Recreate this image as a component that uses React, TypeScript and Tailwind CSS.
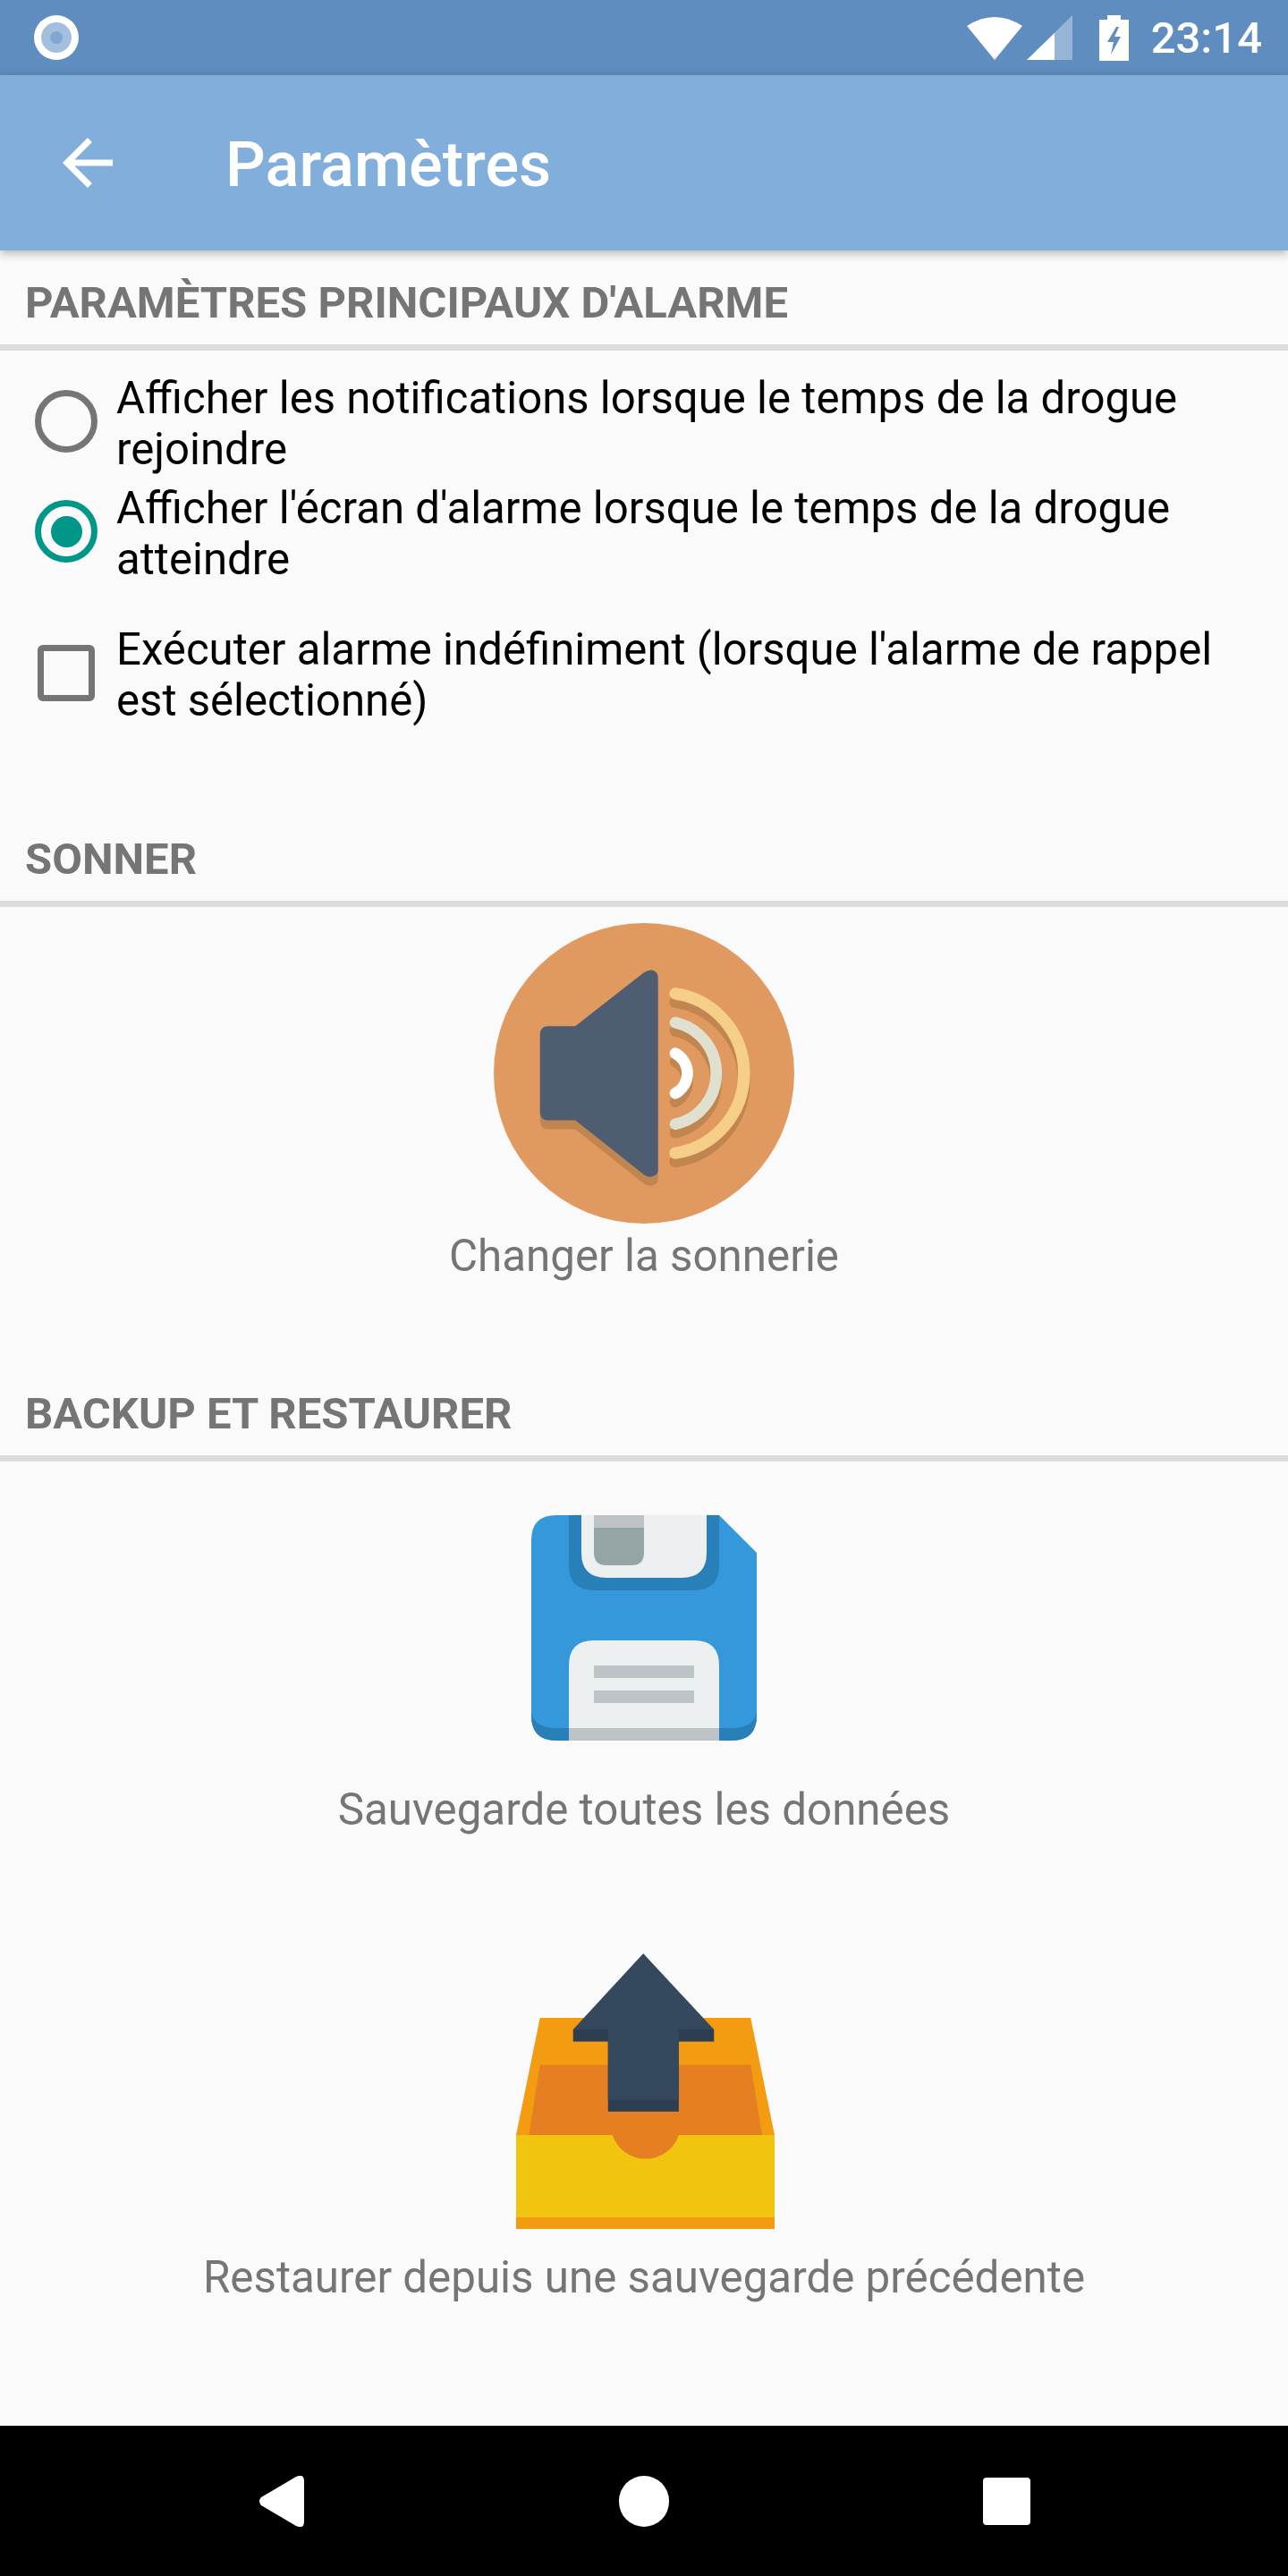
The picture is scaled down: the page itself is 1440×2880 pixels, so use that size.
import React from 'react';

const SectionHeader: React.FC<{ title: string }> = ({ title }) => (
  <div className="flex h-[112px] flex-col justify-end">
    <div className="pl-[28px] text-[49px] leading-[57px] font-bold text-[#757575] mb-[18px]">{title}</div>
    <div className="h-[7px] bg-[#dcdcdc]" />
  </div>
);

const SpeakerIcon = () => (
  <svg width="336" height="336" viewBox="67 67 1006 1006">
    <circle cx="570" cy="570" r="503" fill="#e0995e" />
    <g fill="none" stroke="#c1854f" strokeLinecap="round">
      <path d="M675 331A270 270 0 0 1 675 865" strokeWidth="40" />
      <path d="M675 428A174 174 0 0 1 675 768" strokeWidth="38" />
      <path d="M675 531A76 76 0 0 1 675 665" strokeWidth="38" />
    </g>
    <path fill="#c1854f" d="M250 442H340L565 266Q578 255 595 258Q617 264 617 285V925Q617 942 595 946Q580 948 565 935L340 757H250Q222 757 222 730V470Q222 442 250 442Z" />
    <path fill="#4f5d73" d="M250 412H340L565 236Q578 225 595 224Q617 228 617 250V895Q617 912 595 916Q580 918 565 905L340 727H250Q222 727 222 700V440Q222 412 250 412Z" />
    <g fill="none" strokeLinecap="round">
      <path d="M675 303A270 270 0 0 1 675 837" strokeWidth="40" stroke="#f5cf87" />
      <path d="M675 400A174 174 0 0 1 675 740" strokeWidth="38" stroke="#e0e0d1" />
      <path d="M675 503A76 76 0 0 1 675 637" strokeWidth="38" stroke="#ffffff" />
    </g>
  </svg>
);

const SaveIcon = () => (
  <svg width="252" height="252" viewBox="72 72 756 756">
    <path fill="#3498db" d="M156 72H702L828 198V744Q828 828 744 828H156Q72 828 72 744V156Q72 72 156 72Z" />
    <path fill="#2980b9" d="M72 720V744Q72 828 156 828H744Q828 828 828 744V720Q828 786 744 786H156Q72 786 72 720Z" />
    <path fill="#2980b9" d="M198 72H702V240Q702 324 618 324H282Q198 324 198 240Z" />
    <path fill="#ecf0f1" d="M240 72H660V198Q660 282 576 282H324Q240 282 240 198Z" />
    <path fill="#95a5a6" d="M282 72H450V198Q450 240 408 240H324Q282 240 282 198Z" />
    <rect x="282" y="72" width="168" height="42" fill="#bdc3c7" />
    <path fill="#ecf0f1" d="M198 828V576Q198 492 282 492H618Q702 492 702 576V828Z" />
    <rect x="198" y="786" width="504" height="42" fill="#bdc3c7" />
    <rect x="282" y="576" width="336" height="42" fill="#bdc3c7" />
    <rect x="282" y="660" width="336" height="42" fill="#bdc3c7" />
  </svg>
);

const RestoreIcon = () => (
  <svg width="289" height="308" viewBox="52 72 866 923">
    <path fill="#f39c12" d="M132 288H838L918 680V995H52V680Z" />
    <path fill="#e67e22" d="M132 445H838L876 680H95Z" />
    <path fill="#f1c40f" d="M52 680H918V956H52Z" />
    <path fill="#e67e22" d="M375 680A117 117 0 0 0 597 680Z" />
    <path fill="#2c3e50" d="M243 327H715V367H597V602H360V367H243Z" />
    <path fill="#34495e" d="M478 72L715 327H597V563H360V327H243Z" />
  </svg>
);

const App: React.FC = () => {
  return (
    <div className="flex h-[2880px] w-[1440px] flex-col bg-[#fafafa] font-['Roboto',sans-serif]">
      {/* status bar */}
      <div className="flex h-[84px] shrink-0 items-center bg-[#5f8dbf] pl-[38px] pr-[29px] text-white">
        <div className="flex h-[50px] w-[50px] items-center justify-center rounded-full bg-white">
          <div className="flex h-[34px] w-[34px] items-center justify-center rounded-full bg-[#a3bfdd]">
            <div className="h-[14px] w-[14px] rounded-full bg-[#82a6cf]" />
          </div>
        </div>
        <div className="ml-auto flex items-center">
          <svg width="62" height="50" viewBox="0 0 62 50">
            <path fill="#fff" d="M0 12Q31 -8 62 12L31 50Z" />
          </svg>
          <svg className="ml-[5px]" width="51" height="50" viewBox="0 0 51 50">
            <path fill="#fff" fillOpacity="0.35" d="M51 0V50H0Z" />
            <path fill="#fff" d="M31 20V50H0Z" />
          </svg>
          <svg className="ml-[30px]" width="33" height="51" viewBox="0 0 33 51">
            <path fill="#fff" fillRule="evenodd" d="M9 0H24V5H33V51H0V5H9ZM19 13L9 30H16L13 44L24 24H17L22 13Z" />
          </svg>
          <span className="ml-[25px] text-[49px] leading-none font-medium">23:14</span>
        </div>
      </div>

      {/* toolbar */}
      <div className="relative z-10 flex h-[196px] shrink-0 items-center bg-[#82aedb] pl-[56px] text-white shadow-[0_3px_10px_rgba(0,0,0,0.3)]">
        <svg width="84" height="84" viewBox="0 0 24 24" fill="#fff">
          <path d="M20 11H7.83l5.59-5.59L12 4l-8 8 8 8 1.41-1.41L7.83 13H20v-2z" />
        </svg>
        <h1 className="ml-[112px] mt-[5px] text-[70.3px] leading-none font-medium">Paramètres</h1>
      </div>

      {/* content */}
      <div className="flex-1">
        <SectionHeader title="PARAMÈTRES PRINCIPAUX D'ALARME" />

        <div className="mt-[25px] flex flex-col text-[49.15px] leading-[57px] text-black">
          <div className="flex items-start">
            <div className="ml-[39px] mt-[19px] h-[70px] w-[70px] shrink-0 rounded-full border-[7px] border-[#757575]" />
            <div className="ml-[21px] mr-[40px]">Afficher les notifications lorsque le temps de la drogue rejoindre</div>
          </div>
          <div className="mt-[9px] flex items-start">
            <div className="ml-[39px] mt-[19px] flex h-[70px] w-[70px] shrink-0 items-center justify-center rounded-full border-[7px] border-[#009688]">
              <div className="h-[35px] w-[35px] rounded-full bg-[#009688]" />
            </div>
            <div className="ml-[21px] mr-[40px]">Afficher l'écran d'alarme lorsque le temps de la drogue atteindre</div>
          </div>
          <div className="mt-[44px] flex items-start">
            <div className="ml-[42px] mt-[23px] h-[63px] w-[64px] shrink-0 rounded-[6px] border-[7px] border-[#757575]" />
            <div className="ml-[24px] mr-[40px]">Exécuter alarme indéfiniment (lorsque l'alarme de rappel est sélectionné)</div>
          </div>
        </div>

        <div className="mt-[90px]">
          <SectionHeader title="SONNER" />
        </div>
        <div className="mt-[18px] flex flex-col items-center">
          <SpeakerIcon />
          <div className="mt-[8px] text-[49.3px] leading-[57px] text-[#757575]">Changer la sonnerie</div>
        </div>

        <div className="mt-[89px]">
          <SectionHeader title="BACKUP ET RESTAURER" />
        </div>
        <div className="mt-[60px] flex flex-col items-center">
          <SaveIcon />
          <div className="mt-[49px] text-[49.3px] leading-[57px] text-[#757575]">Sauvegarde toutes les données</div>
          <div className="ml-[2px] mt-[132px]">
            <RestoreIcon />
          </div>
          <div className="mt-[26px] text-[49.3px] leading-[57px] text-[#757575]">Restaurer depuis une sauvegarde précédente</div>
        </div>
      </div>

      {/* nav bar */}
      <div className="flex h-[168px] shrink-0 items-center bg-black pl-[290px]">
        <svg width="50" height="57" viewBox="0 0 50 57">
          <path fill="#fff" d="M2 24L41 1Q50 -3 50 6V51Q50 60 41 56L2 33Q-2 28 2 24Z" />
        </svg>
        <div className="ml-[352px] h-[57px] w-[56px] rounded-full bg-white" />
        <div className="ml-[351px] h-[53px] w-[53px] rounded-[4px] bg-white" />
      </div>
    </div>
  );
};

export default App;
